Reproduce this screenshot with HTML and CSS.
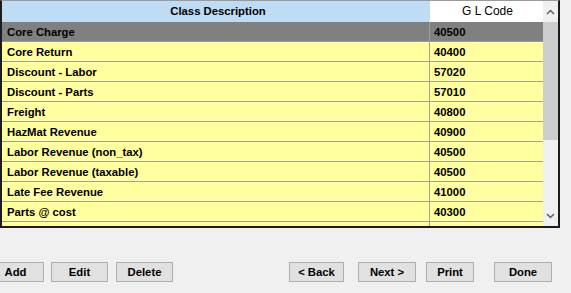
FILE: index.html
```html
<!DOCTYPE html>
<html lang="en">
<head>
    <meta charset="UTF-8">
    <title>GL Classes</title>
    <link rel="stylesheet" href="styles.css">
</head>
<body>
    <div class="grid-frame">
        <div class="grid">
            <div class="grid-head">
                <div class="col-desc">Class Description</div>
                <div class="col-code">G L Code</div>
            </div>
            <div class="row selected"><div class="col-desc">Core Charge</div><div class="col-code">40500</div></div>
            <div class="row"><div class="col-desc">Core Return</div><div class="col-code">40400</div></div>
            <div class="row"><div class="col-desc">Discount - Labor</div><div class="col-code">57020</div></div>
            <div class="row"><div class="col-desc">Discount - Parts</div><div class="col-code">57010</div></div>
            <div class="row"><div class="col-desc">Freight</div><div class="col-code">40800</div></div>
            <div class="row"><div class="col-desc">HazMat Revenue</div><div class="col-code">40900</div></div>
            <div class="row"><div class="col-desc">Labor Revenue (non_tax)</div><div class="col-code">40500</div></div>
            <div class="row"><div class="col-desc">Labor Revenue (taxable)</div><div class="col-code">40500</div></div>
            <div class="row"><div class="col-desc">Late Fee Revenue</div><div class="col-code">41000</div></div>
            <div class="row"><div class="col-desc">Parts @ cost</div><div class="col-code">40300</div></div>
            <div class="row"><div class="col-desc"></div><div class="col-code"></div></div>
        </div>
        <div class="scrollbar">
            <div class="arrow">
                <svg width="9" height="6" viewBox="0 0 9 6"><path d="M1 5 L4.5 1.5 L8 5" fill="none" stroke="#606060" stroke-width="1.5"/></svg>
            </div>
            <div class="track"><div class="thumb"></div></div>
            <div class="arrow">
                <svg width="9" height="6" viewBox="0 0 9 6"><path d="M1 1 L4.5 4.5 L8 1" fill="none" stroke="#606060" stroke-width="1.5"/></svg>
            </div>
        </div>
    </div>

    <div class="button-bar">
        <div class="button-group">
            <button class="btn btn-add">Add</button>
            <button class="btn btn-edit">Edit</button>
            <button class="btn btn-delete">Delete</button>
        </div>
        <div class="button-group">
            <button class="btn btn-back">&lt; Back</button>
            <button class="btn btn-next">Next &gt;</button>
            <button class="btn btn-print">Print</button>
            <button class="btn btn-done">Done</button>
        </div>
    </div>
</body>
</html>
```

FILE: styles.css
```css
body {
    margin: 0;
    background: #f0f0f0;
    font-family: "Liberation Sans", Arial, sans-serif;
    font-size: 11.3px;
    font-weight: bold;
    color: #000;
    overflow: hidden;
}

.grid-frame {
    display: flex;
    width: 556px;
    height: 225px;
    border: 2px solid #1c1c1c;
    border-top: 1px solid #9a9a9a;
    overflow: hidden;
}

.grid {
    width: 541px;
    display: flex;
    flex-direction: column;
    overflow: hidden;
}

.grid-head,
.row {
    display: grid;
    grid-template-columns: 428px 113px;
    flex-shrink: 0;
}

.grid-head {
    height: 20px;
    border-bottom: 1px solid #a0a0a0;
    line-height: 21px;
    text-align: center;
}

.grid-head .col-desc {
    background: #bedcf3;
    padding-left: 4px;
}

.grid-head .col-code {
    background: #fff;
    font-weight: normal;
    font-size: 12px;
    padding-left: 2px;
}

.row {
    height: 19px;
    line-height: 21px;
    background: #ffffa0;
    border-bottom: 1px solid #a4a48c;
}

.row .col-desc {
    padding-left: 5px;
    border-right: 1px solid #a4a48c;
}

.row .col-code {
    padding-left: 4px;
}

.row.selected {
    background: #808080;
    border-bottom-color: #9a9a9a;
}

.row.selected .col-desc {
    border-right-color: #a0a0a0;
}

.scrollbar {
    width: 15px;
    display: flex;
    flex-direction: column;
    background: #f0f0f0;
}

.arrow {
    height: 21px;
    display: flex;
    align-items: center;
    justify-content: center;
}

.track {
    flex: 1;
}

.thumb {
    height: 118px;
    background: #cdcdcd;
}

.button-bar {
    display: flex;
    justify-content: space-between;
    width: 552px;
    margin-top: 34px;
}

.button-group {
    display: flex;
}

.btn {
    width: 57px;
    height: 20px;
    padding: 0;
    background: #e1e1e1;
    border: 1px solid #adadad;
    font-family: "Liberation Sans", Arial, sans-serif;
    font-size: 11.3px;
    font-weight: bold;
    color: #000;
}

.btn-add { margin-left: -13px; }
.btn-edit { margin-left: 7px; }
.btn-delete { margin-left: 8px; }

.btn-back { width: 55px; }
.btn-next { width: 58px; margin-left: 14px; }
.btn-print { width: 48px; margin-left: 10px; }
.btn-done { width: 58px; margin-left: 20px; }
```
